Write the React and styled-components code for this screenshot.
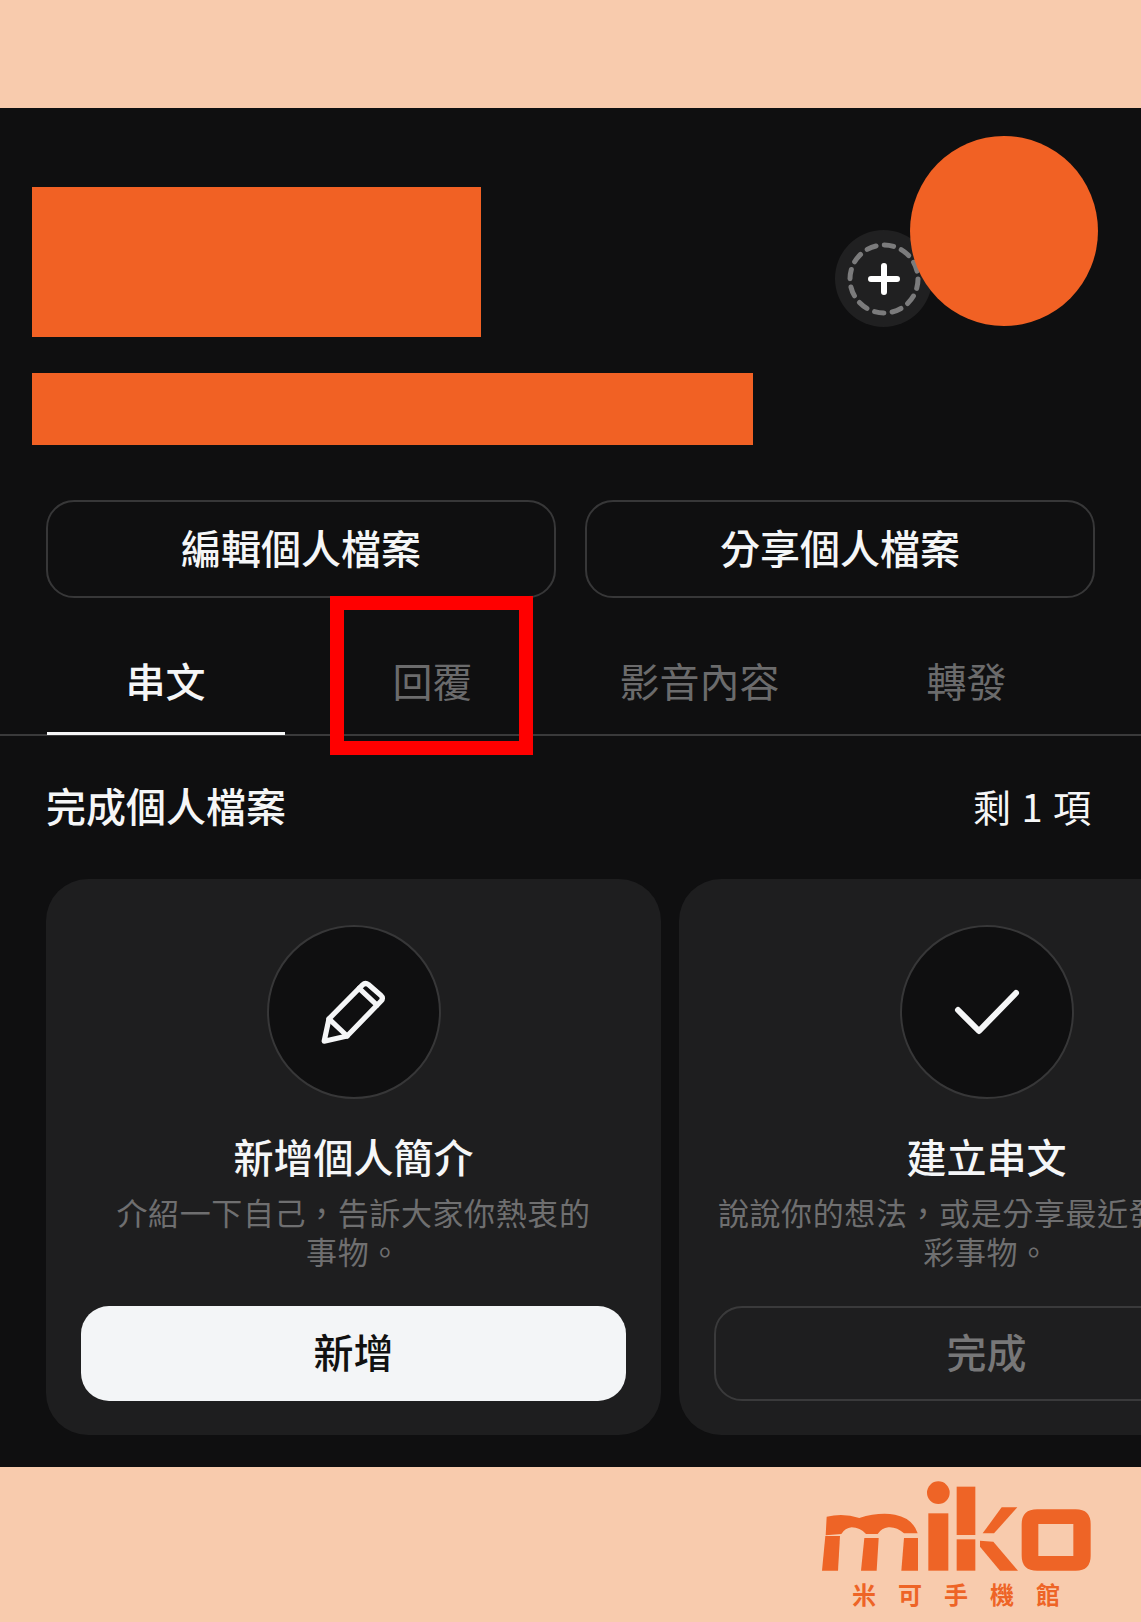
import React from 'react';
import styled, { createGlobalStyle } from 'styled-components';

const GlobalStyle = createGlobalStyle`
  html, body {
    margin: 0;
    padding: 0;
    background: #f8cbad;
  }
  body {
    font-family: "Noto Sans CJK TC", "Noto Sans", sans-serif;
    overflow: hidden;
  }
`;

const Page = styled.div`
  width: 1141px;
  height: 1622px;
  display: flex;
  flex-direction: column;
  overflow: hidden;
  background: #f8cbad;
`;

const TopBand = styled.div`
  height: 108px;
  flex: none;
`;

const Screen = styled.main`
  height: 1359px;
  flex: none;
  background: #0f0f10;
  overflow: hidden;
`;

const Header = styled.header`
  height: 392px;
  padding: 28px 43px 0 32px;
  box-sizing: border-box;
  display: flex;
  justify-content: space-between;
`;

const Masks = styled.div`
  display: flex;
  flex-direction: column;
  gap: 36px;
  padding-top: 51px;
`;

const Mask = styled.div`
  width: ${p => p.$w}px;
  height: ${p => p.$h}px;
  background: #f16124;
`;

const AvatarArea = styled.div`
  position: relative;
  width: 188px;
  height: 190px;
`;

const Avatar = styled.div`
  width: 188px;
  height: 190px;
  border-radius: 50%;
  background: #f16124;
  position: relative;
`;

const AddStory = styled.div`
  position: absolute;
  left: -75px;
  top: 94px;
  width: 97px;
  height: 97px;
  border-radius: 50%;
  background: #202021;
  display: flex;
  align-items: center;
  justify-content: center;
`;

const ProfileActions = styled.div`
  display: grid;
  grid-template-columns: 510px 510px;
  gap: 29px;
  padding: 0 46px;
`;

const OutlineButton = styled.button`
  height: 98px;
  box-sizing: border-box;
  border: 2px solid ${p => (p.$dim ? '#3a3a3b' : '#373738')};
  border-radius: 28px;
  background: transparent;
  color: ${p => (p.$dim ? '#777778' : '#f5f6f7')};
  font: 500 40px/1 "Noto Sans CJK TC", sans-serif;
  padding: 0 0 4px;
`;

const Tabs = styled.nav`
  display: grid;
  grid-template-columns: repeat(4, 267px);
  padding-left: 32px;
  height: 138px;
  box-sizing: border-box;
  border-bottom: 2px solid #3a3a3b;
  position: relative;
`;

const Tab = styled.div`
  position: relative;
  display: flex;
  align-items: center;
  justify-content: center;
  padding-top: 26px;
  box-sizing: border-box;
  height: 137px;
  font-size: 40px;
  font-weight: ${p => (p.$active ? 500 : 400)};
  color: ${p => (p.$active ? '#f5f6f7' : '#6b6b6c')};

  ${p => p.$active && `
    &::after {
      content: '';
      position: absolute;
      left: 15px;
      right: 14px;
      bottom: 0;
      height: 3px;
      background: #f5f6f7;
    }
  `}
`;

const Highlight = styled.div`
  position: absolute;
  left: 330px;
  top: -2px;
  width: 203px;
  height: 159px;
  box-sizing: border-box;
  border: 14px solid #ff0000;
  pointer-events: none;
`;

const SectionHead = styled.div`
  display: flex;
  justify-content: space-between;
  align-items: center;
  height: 143px;
  padding: 0 50px 5px 46px;
  box-sizing: border-box;
  color: #f5f6f7;
  font-size: 40px;
  font-weight: 500;
`;

const Remaining = styled.span`
  font-size: 38px;
  font-weight: 400;
  word-spacing: 2px;
`;

const Cards = styled.div`
  display: flex;
  gap: 18px;
  padding-left: 46px;
  width: 1400px;
`;

const Card = styled.article`
  width: 615px;
  height: 556px;
  flex: none;
  box-sizing: border-box;
  padding: 46px 35px 34px;
  border-radius: 42px;
  background: #1e1e1f;
  display: flex;
  flex-direction: column;
  align-items: center;
`;

const IconCircle = styled.div`
  width: 174px;
  height: 174px;
  box-sizing: border-box;
  border-radius: 50%;
  border: 2px solid #373738;
  background: #0f0f10;
  display: flex;
  align-items: center;
  justify-content: center;
  flex: none;
`;

const CardTitle = styled.h3`
  margin: 32px 0 0;
  font-size: 40px;
  font-weight: 500;
  line-height: 50px;
  color: #f5f6f7;
`;

const CardText = styled.p`
  margin: 11px -20px 0;
  font-size: 31px;
  line-height: 39px;
  letter-spacing: 0.6px;
  color: #6f6f70;
  text-align: center;
  white-space: nowrap;
  flex: 1;
`;

const FillButton = styled.button`
  width: 100%;
  height: 95px;
  flex: none;
  border: 0;
  border-radius: 28px;
  background: #f3f5f7;
  color: #111;
  font: 500 40px/1 "Noto Sans CJK TC", sans-serif;
  padding: 0 0 6px;
`;

const DimButton = styled(OutlineButton)`
  width: 100%;
  height: 95px;
  flex: none;
  padding-bottom: 6px;
`;

const Footer = styled.footer`
  flex: 1;
  padding: 13px 47px 0 0;
  display: flex;
  flex-direction: column;
  align-items: flex-end;
`;

const LogoMark = styled.svg`
  width: 274px;
  height: 94px;
  display: block;
`;

const LogoText = styled.div`
  margin-top: 5px;
  padding-right: 12px;
  color: #ee6426;
  font-size: 24px;
  line-height: 30px;
  font-weight: 700;
  letter-spacing: 22px;
  white-space: nowrap;
`;

function PlusDashed() {
  return (
    <svg width="76" height="76" viewBox="0 0 76 76" fill="none">
      <circle cx="38" cy="38" r="34" stroke="#7b7b7c" strokeWidth="5" strokeDasharray="9.5 8.3" strokeLinecap="round" />
      <path d="M38 25v26M25 38h26" stroke="#fff" strokeWidth="6" strokeLinecap="round" />
    </svg>
  );
}

function PencilIcon() {
  return (
    <svg width="72" height="72" viewBox="60 50 210 210" fill="none" stroke="#f5f6f7" strokeWidth="15" strokeLinejoin="round" strokeLinecap="round">
      <path d="M78 240 L92 175 L190 76 Q198 68 207 75 L243 106 Q252 114 244 123 L145 225 Z" />
      <path d="M92 175 L145 225" />
      <path d="M180 86 L232 135" />
    </svg>
  );
}

function CheckIcon() {
  return (
    <svg width="68" height="48" viewBox="0 0 68 48" fill="none" stroke="#f5f6f7" strokeWidth="6" strokeLinecap="round" strokeLinejoin="round">
      <path d="M5 22 L26 43 L63 5" />
    </svg>
  );
}

function MikoLogo() {
  return (
    <LogoMark viewBox="120 90 822 282" fill="#ee6426">
      <path d="M140 200 Q190 188 238 204 Q295 186 345 194 Q398 204 413 250 L372 250 Q350 230 325 232 Q305 234 293 252 L258 252 Q240 232 215 232 Q195 234 184 252 L137 256 Z" />
      <path d="M136 258 L180 258 L174 362 L126 362 Z" />
      <path d="M253 264 L296 264 L290 362 L243 362 Z" />
      <path d="M372 264 L414 264 L414 362 L364 362 Z" />
      <circle cx="475" cy="128" r="34" />
      <rect x="445" y="190" width="60" height="172" />
      <rect x="530" y="110" width="56" height="145" />
      <rect x="530" y="268" width="56" height="94" />
      <path d="M608 250 L665 172 L712 172 L642 250 Z" />
      <path d="M600 272 L640 275 L714 362 L660 362 L600 290 Z" />
      <path fillRule="evenodd" d="M772 178 H887 Q932 178 932 223 V317 Q932 362 887 362 H772 Q725 362 725 317 V223 Q725 178 772 178 Z M775 222 V318 H880 V222 Z" />
    </LogoMark>
  );
}

const cards = [
  {
    title: '新增個人簡介',
    lines: ['介紹一下自己\uFF0C告訴大家你熱衷的', '事物。'],
    icon: <PencilIcon />,
    action: <FillButton>新增</FillButton>,
  },
  {
    title: '建立串文',
    lines: ['說說你的想法\uFF0C或是分享最近發生的精', '彩事物。'],
    icon: <CheckIcon />,
    action: <DimButton $dim>完成</DimButton>,
  },
];

export default function App() {
  return (
    <Page>
      <GlobalStyle />
      <TopBand />
      <Screen>
        <Header>
          <Masks>
            <Mask $w={449} $h={150} />
            <Mask $w={721} $h={72} />
          </Masks>
          <AvatarArea>
            <AddStory><PlusDashed /></AddStory>
            <Avatar />
          </AvatarArea>
        </Header>
        <ProfileActions>
          <OutlineButton>編輯個人檔案</OutlineButton>
          <OutlineButton>分享個人檔案</OutlineButton>
        </ProfileActions>
        <Tabs>
          <Tab $active>串文</Tab>
          <Tab>回覆</Tab>
          <Tab>影音內容</Tab>
          <Tab>轉發</Tab>
          <Highlight />
        </Tabs>
        <SectionHead>
          <span>完成個人檔案</span>
          <Remaining>剩 1 項</Remaining>
        </SectionHead>
        <Cards>
          {cards.map(card => (
            <Card key={card.title}>
              <IconCircle>{card.icon}</IconCircle>
              <CardTitle>{card.title}</CardTitle>
              <CardText>
                {card.lines[0]}<br />{card.lines[1]}
              </CardText>
              {card.action}
            </Card>
          ))}
        </Cards>
      </Screen>
      <Footer>
        <MikoLogo />
        <LogoText>米可手機館</LogoText>
      </Footer>
    </Page>
  );
}
